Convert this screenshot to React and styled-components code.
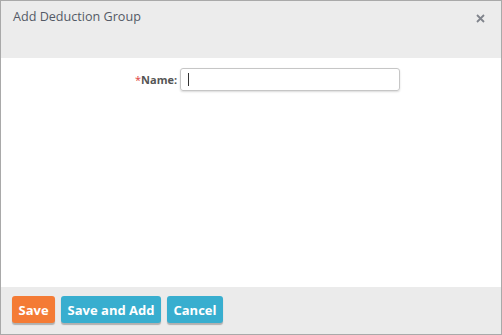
import React from "react";
import styled, { createGlobalStyle } from "styled-components";

const Global = createGlobalStyle`
  html, body {
    margin: 0;
    padding: 0;
    background: #fff;
  }
  body {
    font-family: "Open Sans", "Liberation Sans", sans-serif;
  }
`;

const Dialog = styled.div`
  box-sizing: border-box;
  width: 502px;
  height: 335px;
  border: 1px solid #a9a9a9;
  display: flex;
  flex-direction: column;
  background: #fff;
`;

const Header = styled.div`
  height: 57px;
  background: #ececec;
  display: flex;
  align-items: flex-start;
  justify-content: space-between;
  padding: 6px 12px 0 12px;
  box-sizing: border-box;
`;

const Title = styled.div`
  font-size: 12.6px;
  color: #545a66;
  line-height: 20px;
`;

const Close = styled.svg`
  width: 9px;
  height: 9px;
  margin-top: 7px;
  margin-right: 4px;
`;

const Body = styled.div`
  flex: 1;
  padding-top: 10px;
`;

const FieldRow = styled.div`
  display: flex;
  align-items: center;
  justify-content: flex-start;
  padding-left: 134px;
`;

const Label = styled.label`
  font-size: 11px;
  font-weight: 700;
  color: #555;
  margin-right: 3px;
`;

const Req = styled.span`
  color: #e04040;
  font-weight: 400;
`;

const Input = styled.div`
  box-sizing: border-box;
  width: 220px;
  height: 23px;
  border: 1px solid #c6c6c6;
  border-radius: 3px;
  box-shadow: 0 1px 2px rgba(0, 0, 0, 0.15);
  display: flex;
  align-items: center;
  padding-left: 7px;
`;

const Caret = styled.span`
  width: 1px;
  height: 13px;
  background: #333;
`;

const Footer = styled.div`
  height: 47px;
  background: #ebebeb;
  display: flex;
  align-items: flex-start;
  gap: 6px;
  padding: 9px 0 0 11px;
  box-sizing: border-box;
`;

const Button = styled.button`
  border: none;
  border-radius: 3px;
  height: 27px;
  padding: 0 6.5px;
  font-family: "Open Sans", "Liberation Sans", sans-serif;
  font-weight: 700;
  font-size: 13px;
  color: #fff;
  background: ${(p) => (p.$primary ? "#f47b35" : "#38aecf")};
  box-shadow: 0 2px 1px rgba(0, 0, 0, 0.25);
  cursor: pointer;
`;

export default function App() {
  return (
    <>
      <Global />
      <Dialog>
        <Header>
          <Title>Add Deduction Group</Title>
          <Close viewBox="0 0 9 9">
            <path d="M1 1L8 8M8 1L1 8" stroke="#80848c" strokeWidth="1.8" />
          </Close>
        </Header>
        <Body>
          <FieldRow>
            <Label>
              <Req>*</Req>Name:
            </Label>
            <Input>
              <Caret />
            </Input>
          </FieldRow>
        </Body>
        <Footer>
          <Button $primary>Save</Button>
          <Button>Save and Add</Button>
          <Button>Cancel</Button>
        </Footer>
      </Dialog>
    </>
  );
}
